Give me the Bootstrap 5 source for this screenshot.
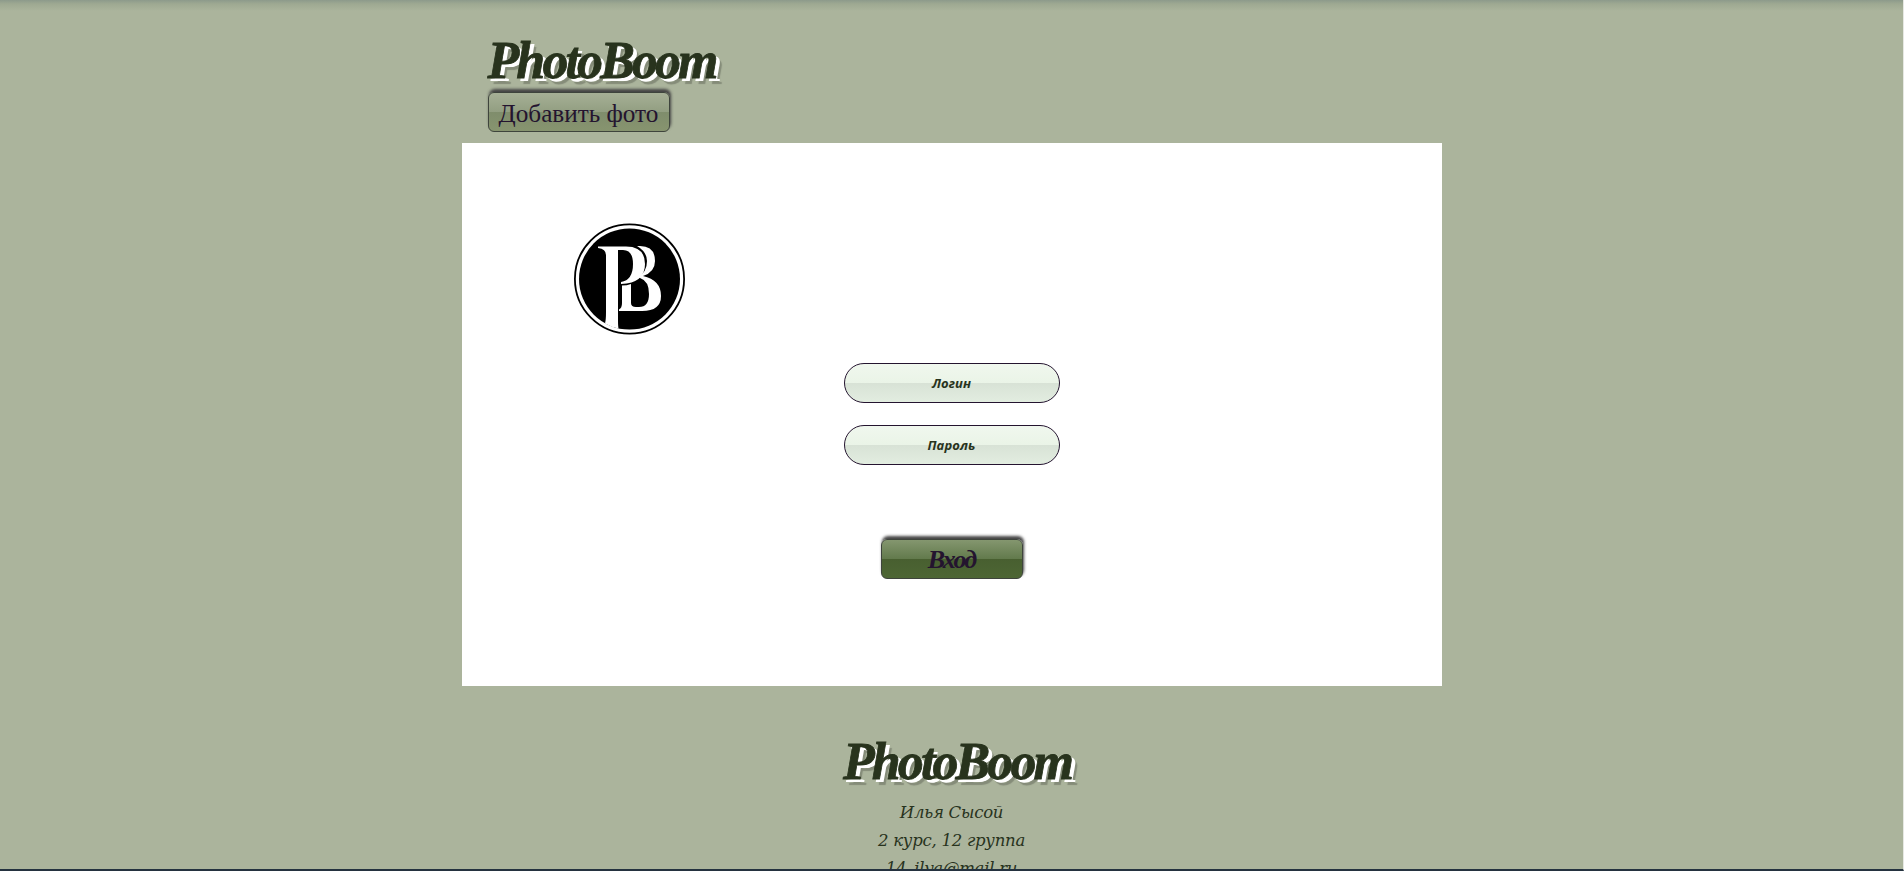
<!DOCTYPE html>
<html lang="ru">
<head>
<meta charset="utf-8">
<title>PhotoBoom</title>
<link href="https://cdn.jsdelivr.net/npm/bootstrap@5.3.0/dist/css/bootstrap.min.css" rel="stylesheet">
<style>
body{background:linear-gradient(#8c9a8b,#9ea992 4px,#abb49c 11px);color:#28331d;font-family:"Liberation Serif",serif;height:871px;border-bottom:2px solid #24323f;border-right:1px solid #e6e8e2}
.site{width:980px}
.site-head{height:143px;padding:33px 26px 0}
.brand{font:italic bold 52px/56px "Liberation Serif",serif;letter-spacing:-2.9px;color:#28331d;text-decoration:none;-webkit-text-stroke:.8px #28331d;text-shadow:3px 3px 0 #fff,4px 3px 0 #fff,6px 6px 1px #858c79;width:232px;white-space:nowrap}
.btn-glass{border:1px solid #3e443c;border-radius:6px;padding:0;box-shadow:1px -3px 3px 0 #444;color:#24142f}
.btn-add{width:182px;height:40px;margin-top:3px;font-size:25.2px;line-height:42px;background:linear-gradient(#a6b096,#929e81 50%,#7f8d6c 50%,#87946f)}
.btn-enter{width:142px;height:40px;margin-top:52px;font:italic bold 26px/40px "Liberation Serif",serif;letter-spacing:-1.8px;background:linear-gradient(#84966f,#627a4c 50%,#485f30 50%,#4d6634)}
.btn-glass:hover{color:#24142f}
.panel{height:543px;padding-top:80px}
.emblem{margin-left:112px;width:111px;height:112px}
.login-form{padding-top:28px}
.field{width:216px;height:40px;border:1px solid #24142f;border-radius:20px;background:linear-gradient(#f0f7ee,#eaf4e7 50%,#d8e2d6 50%,#e2ede0);font:italic bold 13px "Open Sans",sans-serif;letter-spacing:.1px;text-align:center;padding:0;margin-bottom:22px}
.field:focus{box-shadow:none}
.field::placeholder{color:#28331d;opacity:1}
.brand-foot{margin-left:11px}
.about{font:italic 16.5px/28px "DejaVu Serif",serif;letter-spacing:-.25px;margin-top:9px}
</style>
</head>
<body class="overflow-hidden">
<div class="site mx-auto">
<header class="site-head d-flex flex-column align-items-start">
<a class="brand" href="#">PhotoBoom</a>
<button class="btn btn-glass btn-add">Добавить фото</button>
</header>
<main class="panel bg-white">
<svg class="emblem d-block" viewBox="0 0 111 112" aria-hidden="true">
<circle cx="55.5" cy="56" r="54.6" fill="#fff" stroke="#000" stroke-width="1.8"/>
<circle cx="55.5" cy="56" r="50.5"/>
<g fill="#fff">
<path d="M63 23H66Q81 23 81 38Q81 49 69 53Q87 57 87 73Q87 88 68 88H45V86.500Q48 85 48 80V62.500Q53 62.500 57 61V80Q57 84 62 84H65Q75 84 75 71Q75 58 66 55L64 54Q73 49 73 38Q73 29 63 23Z"/>
<path d="M24 23.500H52Q71 23.500 71 41Q71 60 47 61V59Q59 57 59 41Q59 27 49 27H44V97Q44 103 44.500 105.500Q37 104 31 100.500Q32 97 32 89V32Q32 26 24 25Z"/>
</g>
</svg>
<form class="login-form d-flex flex-column align-items-center">
<input class="form-control field" type="text" placeholder="Логин" aria-label="Логин">
<input class="form-control field" type="password" placeholder="Пароль" aria-label="Пароль">
<button class="btn btn-glass btn-enter" type="button">Вход</button>
</form>
</main>
<footer class="d-flex flex-column align-items-center pt-5 text-center">
<a class="brand brand-foot" href="#">PhotoBoom</a>
<div class="about">Илья Сысой<br>2 курс, 12 группа<br>14_ilya@mail.ru</div>
</footer>
</div>
<script src="https://cdn.jsdelivr.net/npm/bootstrap@5.3.0/dist/js/bootstrap.bundle.min.js"></script>
</body>
</html>
